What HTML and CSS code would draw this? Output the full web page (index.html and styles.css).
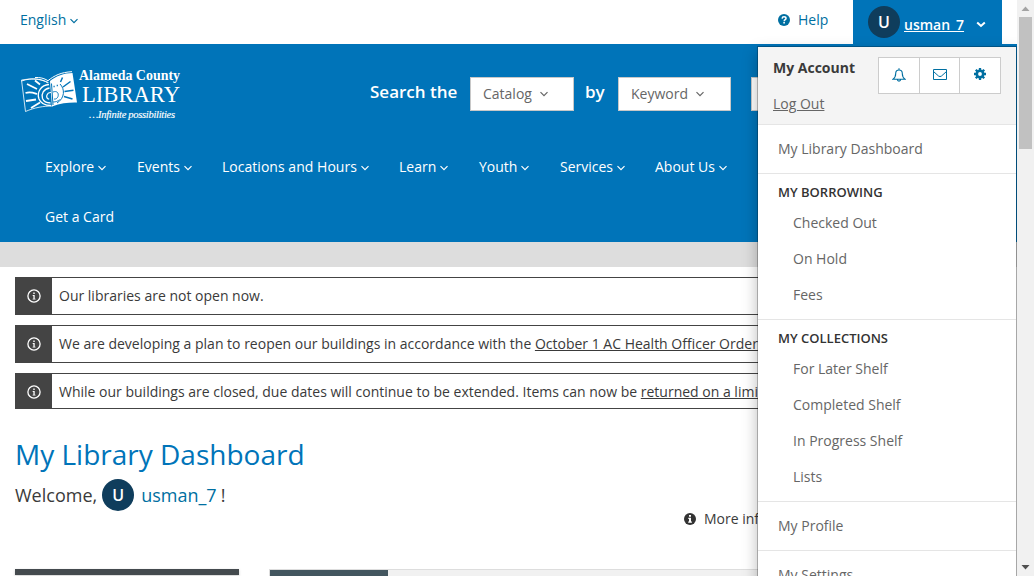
FILE: index.html
```html
<!DOCTYPE html>
<html lang="en">
<head>
<meta charset="utf-8">
<title>My Library Dashboard</title>
<link rel="stylesheet" href="styles.css">
</head>
<body>
<svg width="0" height="0" class="defs"><symbol id="chev" viewBox="0 0 8 6"><path d="M.5 1.200 4 4.700l3.500-3.500" fill="none" stroke="currentColor" stroke-width="1.200"/></symbol>
<symbol id="info" viewBox="0 0 14 14"><circle cx="7" cy="7" r="6.1" fill="none" stroke="currentColor" stroke-width="1.300"/><path d="M6.300 3.600h1.400v1.300H6.300zM5.700 6h2v3.700h.8v.9H5.600v-.9h.8V6.900h-.7z" fill="currentColor"/></symbol></svg>
<div class="window">
<div class="page">
  <div class="topbar">
    <a class="language">English <svg class="chev"><use href="#chev"/></svg></a>
    <a class="help"><svg width="12" height="12" viewBox="0 0 12 12"><circle cx="6" cy="6" r="6" fill="currentColor"/><path d="M4.1 4.6C4.2 3.3 5 2.8 6 2.8c1.2 0 2 .7 2 1.6C8 5.7 6.2 5.7 6.2 7.2" fill="none" stroke="#fff" stroke-width="1.5"/><path d="M5.3 8h1.6v1.5H5.3z" fill="#fff"/></svg><span>Help</span></a>
    <div class="user"><span class="avatar">U</span><a class="username">usman_7</a><svg class="user-chev" viewBox="0 0 10 7"><path d="M1.2 1.5 5 5l3.800-3.500" fill="none" stroke="#fff" stroke-width="2"/></svg></div>
  </div>
  <header class="header">
    <div class="brand-row">
      <svg class="logo" width="164" height="60" viewBox="18 64 164 60">
        <path d="M50 81C56 76 64 73 72.500 73L77 102.500c-8-.2-16 .5-25 4z" fill="#fff"/>
        <g fill="none" stroke="#fff">
          <path d="M25.500 111.500 21.500 80c9-1.500 18-1.500 27 2.500M25.500 111.500c9-4 18-5.500 27-5.500" stroke-width=".8"/>
          <path d="M21.500 81C33 77 42 79 48 83M35 77.500c5-.3 9 .7 13 3.200 6-5 13-8.500 24-9" stroke-width="1"/>
          <path d="M49 84.500C41 85 36.500 92 39 99c1.800 4.500 6 6.500 12 6.500M49.500 88c-6 1-8.500 6-7 10.500 1.200 3 4 4.500 8 4.500" stroke-width="1.300"/>
          <path d="M51 92.500c-4.500 0-6 5.500-1.800 6.800" stroke-width="1.200"/>
          <path d="m27 84 10 5m-11.500 4c5-1.500 7-.5 11.500 1M26 101l10-1.500m-5 8.500 9-5.500M35 80.500l5 4" stroke-width="1.800"/>
        </g>
        <g fill="none" stroke="#0074b9">
          <path d="M51.500 83.500 53 105M60 84c5 5 5 14-3 19" stroke-width="1"/>
          <path d="M53 92c4-1.500 6 1 5 4.500-.7 2-2.500 3-4 2.500M53 102c3 0 5-.8 6.500-2.500" stroke-width=".9"/>
          <path d="m60.500 82 2-4.500m.5 9.500 7.500-5.500m-6 10 9-1.200m-9.500 6.200 8.500 2.500" stroke-width="1.500"/>
          <path d="M53.500 86.500h1.200m2-1h1.200" stroke-width="1.300"/>
        </g>
        <g fill="#fff" font-family="'Liberation Serif', serif">
          <text x="79" y="79.500" font-size="14" font-weight="bold" textLength="101" lengthAdjust="spacingAndGlyphs">Alameda County</text>
          <text x="82" y="101.800" font-size="23" textLength="98" lengthAdjust="spacingAndGlyphs">LIBRARY</text>
          <text x="89" y="117.500" font-size="10.500" font-style="italic" stroke="#fff" stroke-width=".15" textLength="86" lengthAdjust="spacing">…Infinite possibilities</text>
        </g>
      </svg>
      <div class="search"><b>Search the</b><span class="select catalog">Catalog <svg class="chev"><use href="#chev"/></svg></span><b class="by">by</b><span class="select keyword">Keyword <svg class="chev"><use href="#chev"/></svg></span><span class="select query"></span></div>
    </div>
    <nav class="nav">
      <a class="explore">Explore<svg class="chev"><use href="#chev"/></svg></a>
      <a class="events">Events<svg class="chev"><use href="#chev"/></svg></a>
      <a class="locations">Locations and Hours<svg class="chev"><use href="#chev"/></svg></a>
      <a class="learn">Learn<svg class="chev"><use href="#chev"/></svg></a>
      <a class="youth">Youth<svg class="chev"><use href="#chev"/></svg></a>
      <a class="services">Services<svg class="chev"><use href="#chev"/></svg></a>
      <a class="about">About Us<svg class="chev"><use href="#chev"/></svg></a>
      <a>Get a Card</a>
    </nav>
  </header>
  <div class="band"></div>
  <main class="main">
    <div class="notice"><span class="notice-icon"><svg width="14" height="14"><use href="#info"/></svg></span><p>Our libraries are not open now.</p></div>
    <div class="notice"><span class="notice-icon"><svg width="14" height="14"><use href="#info"/></svg></span><p>We are developing a plan to reopen our buildings in accordance with the <u>October 1 AC Health Officer Order</u></p></div>
    <div class="notice last"><span class="notice-icon"><svg width="14" height="14"><use href="#info"/></svg></span><p>While our buildings are closed, due dates will continue to be extended. Items can now be <u>returned on a limi</u></p></div>
    <h1>My Library Dashboard</h1>
    <div class="welcome"><span>Welcome,</span><span class="avatar">U</span><a>usman_7</a><span class="bang">!</span></div>
    <div class="more"><svg width="12" height="12" viewBox="0 0 12 12"><circle cx="6" cy="6" r="6" fill="#333"/><path d="M5 2h2v1.700H5zM4.300 4.800H7v3.700h.9v1.300H4.200V8.500H5V6h-.7z" fill="#fff"/></svg><span>More inf</span></div>
    <div class="cards"><div class="side-card"></div><div class="tab-card"><div class="tab"></div></div></div>
  </main>
  <aside class="menu">
    <div class="menu-head">
      <div class="menu-title"><strong>My Account</strong><a>Log Out</a></div>
      <div class="buttons">
        <span><svg width="14" height="14" viewBox="0 0 14 14"><path d="M1 11.200c2-1.400 2.700-3.300 2.700-5.700C3.700 3.300 5 2 7 2s3.300 1.300 3.300 3.500c0 2.400.7 4.300 2.700 5.700zM7 .2V2M5.300 11.500c.2 2.200 3.200 2.200 3.400 0" fill="none" stroke="currentColor" stroke-width="1.100"/></svg></span>
        <span><svg width="14" height="12" viewBox="0 0 14 12"><path d="M.5.500h13v10H.5zM.5 2.500 5.500 7q1.500 1.200 3 0l5-4.500" fill="none" stroke="currentColor"/></svg></span>
        <span><svg width="12" height="12" viewBox="0 0 12 12"><circle cx="6" cy="6" r="3.200" fill="none" stroke="currentColor" stroke-width="2.600"/><path d="M6 0v2.500M6 9.500V12M0 6h2.500M9.500 6H12M1.800 1.800l1.600 1.600M8.600 8.600l1.600 1.600M1.800 10.200l1.600-1.600M8.600 3.400l1.600-1.600" stroke="currentColor" stroke-width="2.300"/></svg></span>
      </div>
    </div>
    <a class="menu-item">My Library Dashboard</a>
    <section><h2>MY BORROWING</h2><a>Checked Out</a><a>On Hold</a><a>Fees</a></section>
    <section><h2>MY COLLECTIONS</h2><a>For Later Shelf</a><a>Completed Shelf</a><a>In Progress Shelf</a><a>Lists</a></section>
    <a class="menu-item">My Profile</a>
    <a class="menu-item">My Settings</a>
  </aside>
</div>
<div class="scrollbar"><svg width="17" height="17"><path d="M4.500 11 8.500 6.500l4 4.500z" fill="#a3a3a3"/></svg><div class="thumb"></div><svg width="17" height="17"><path d="M4.500 6h8l-4 4.500z" fill="#505050"/></svg></div>
</div>
</body>
</html>
```
FILE: styles.css
```css
* { box-sizing: border-box; }
body { margin: 0; overflow: hidden; font: 14px/20px "Open Sans", sans-serif; color: #3a3a3a; background: #fff; }
.defs { position: absolute; }
svg { display: block; flex: none; }
.window { display: flex; width: 1034px; height: 576px; overflow: hidden; }
.page { position: relative; width: 1017px; overflow: hidden; }
.chev { width: 8px; height: 6px; }
.topbar { display: flex; height: 44px; padding-left: 20px; white-space: nowrap; }
.language { display: flex; align-items: center; gap: 4px; height: 40px; width: 758px; color: #006fa1; }
.language .chev { margin-top: 2px; }
.help { display: flex; align-items: center; gap: 8px; height: 40px; width: 75px; color: #006fa1; }
.user { display: flex; width: 149px; height: 44px; padding-left: 15px; background: #0074b9; color: #fff; }
.avatar { display: block; width: 32px; height: 32px; border-radius: 50%; background: #0f3d5c; color: #fff; font-size: 16px; font-weight: 600; line-height: 33px; text-align: center; }
.user .avatar { margin-top: 6px; }
.username { margin: 15px 12px 0 4px; width: 60px; font-weight: 600; text-decoration: underline; text-underline-offset: 1px; text-decoration-skip-ink: none; }
.user-chev { width: 10px; height: 7px; margin-top: 21px; }
.header { height: 198px; background: #0074b9; color: #fff; }
.brand-row { display: flex; height: 98px; padding: 20px 0 0 18px; }
.search { display: flex; height: 34px; margin: 13px 0 0 188px; font-size: 17px; line-height: 29px; }
.search b { width: 100px; font-weight: 600; white-space: nowrap; }
.search .by { width: 33px; margin-left: 11px; }
.select { display: flex; align-items: center; gap: 8px; height: 34px; padding: 0 12px 2px; border: 1px solid #c8c8c8; background: #fff; color: #666; font-size: 14px; }
.select .chev { margin-top: 2px; }
.catalog { width: 104px; }
.keyword { width: 113px; }
.query { width: 100px; margin-left: 20px; }
.nav { display: flex; flex-wrap: wrap; width: 758px; padding-left: 45px; }
.nav a { display: flex; align-items: center; gap: 4px; height: 50px; font-weight: 500; white-space: nowrap; }
.nav .chev { margin-top: 1px; }
.explore { width: 92px; }
.events { width: 85px; }
.nav .locations { width: 177px; letter-spacing: .03px; }
.learn { width: 80px; }
.youth { width: 81px; }
.services { width: 95px; }
.about { width: 90px; }
.band { height: 25px; background: #ddd; }
.main { display: flex; flex-direction: column; padding: 10px 15px 0; height: 309px; overflow: hidden; }
.notice { display: flex; flex: none; height: 38px; margin-bottom: 10px; border: 1px solid #444; white-space: nowrap; overflow: hidden; }
.notice.last { height: 36px; margin-bottom: 0; }
.notice-icon { display: flex; flex: none; align-items: center; justify-content: center; width: 36px; background: #444; color: #fff; }
.last .notice-icon { padding-top: 2px; }
.notice p { margin: 8px 7px 0; }
u { text-underline-offset: 1px; }
h1 { flex: none; height: 40px; margin: 25px 0 0; color: #0074b9; font-size: 28px; font-weight: 400; line-height: 40px; white-space: nowrap; }
.welcome { display: flex; flex: none; height: 32px; margin-top: 5px; font-size: 18px; line-height: 32px; }
.welcome .avatar { margin: 0 7px 0 5px; }
.welcome a { color: #006fa1; }
.bang { margin-left: 4px; }
.more { display: flex; flex: none; align-items: center; gap: 8px; height: 20px; margin: -2px 0 0 669px; }
.cards { display: flex; flex: none; gap: 30px; margin-top: 40px; }
.side-card { width: 224px; height: 6px; background: #444a4e; box-shadow: 0 1px 3px rgba(0,0,0,.2); }
.tab-card { width: 733px; height: 20px; border: 1px solid #ddd; background: #f1f1f1; }
.tab { width: 118px; height: 19px; background: #43565f; }
.menu { position: absolute; left: 757px; top: 46px; width: 260px; height: 700px; border: 1px solid rgba(0,0,0,.24); background: #fff; background-clip: padding-box; box-shadow: 0 6px 14px rgba(0,0,0,.26); color: #666; white-space: nowrap; }
.menu-head { display: flex; height: 78px; padding: 10px 15px 0; border-bottom: 1px solid #e5e5e5; background: #f4f4f4; }
.menu-title { display: flex; flex-direction: column; gap: 16px; width: 105px; padding-top: 1px; }
.menu-title strong { color: #3a3a3a; font-weight: 700; }
.menu-title a { text-decoration: underline; text-underline-offset: 1px; }
.buttons { display: flex; width: 123px; height: 37px; border: 1px solid #ccc; background: #fff; color: #006fa1; }
.buttons span { display: flex; align-items: center; justify-content: center; width: 41px; padding-bottom: 2px; border-right: 1px solid #ccc; }
.buttons span:nth-child(2) { width: 40px; }
.buttons span:last-child { width: 40px; padding-bottom: 3px; border: 0; }
.menu-item { display: block; height: 49px; padding: 14px 20px 0; border-bottom: 1px solid #e5e5e5; }
section { padding: 8px 20px 6px; border-bottom: 1px solid #e5e5e5; }
h2 { height: 23px; margin: 0; color: #333; font-size: 13px; font-weight: 600; line-height: 20px; }
section a { display: block; height: 36px; padding: 8px 0 0 15px; }
.scrollbar { display: flex; flex-direction: column; width: 17px; background: #f1f1f1; }
.thumb { width: 13px; height: 132px; margin: 0 2px 410px; background: #c1c1c1; }
```
